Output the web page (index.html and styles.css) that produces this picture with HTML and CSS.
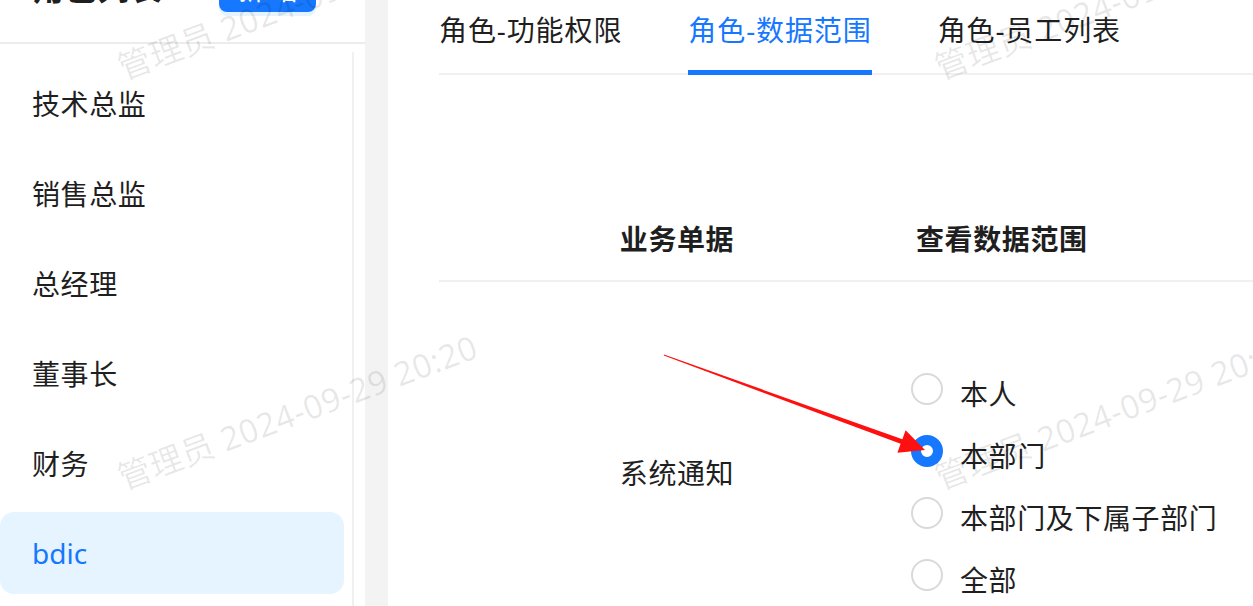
FILE: index.html
```html
<!DOCTYPE html>
<html lang="zh-CN">
<head>
    <meta charset="UTF-8">
    <meta name="viewport" content="width=device-width, initial-scale=1.0">
    <title>角色管理</title>
    <link rel="stylesheet" href="styles.css">
</head>
<body>
    <div class="app">
        <aside class="sidebar">
            <div class="side-head">
                <h2 class="side-title">角色列表</h2>
                <button class="add-btn">新 增</button>
            </div>
            <div class="role-list">
                <div class="role">技术总监</div>
                <div class="role">销售总监</div>
                <div class="role">总经理</div>
                <div class="role">董事长</div>
                <div class="role">财务</div>
                <div class="role active">bdic</div>
            </div>
        </aside>

        <main class="content">
            <div class="tabs">
                <div class="tab">角色-功能权限</div>
                <div class="tab active">角色-数据范围</div>
                <div class="tab">角色-员工列表</div>
            </div>

            <div class="table">
                <div class="thead">
                    <div class="th col-doc">业务单据</div>
                    <div class="th col-scope">查看数据范围</div>
                </div>
                <div class="trow">
                    <div class="td col-doc">系统通知</div>
                    <div class="td col-scope">
                        <div class="radios">
                            <label class="radio"><span class="dot"></span>本人</label>
                            <label class="radio checked"><span class="dot"></span>本部门</label>
                            <label class="radio"><span class="dot"></span>本部门及下属子部门</label>
                            <label class="radio"><span class="dot"></span>全部</label>
                        </div>
                    </div>
                </div>
            </div>
        </main>
    </div>

    <!-- annotation arrow drawn over the screenshot -->
    <svg class="arrow" width="1253" height="606" viewBox="0 0 1253 606">
        <polygon fill="#ff1010" points="664,354.6 902.4,439.2 905.6,430.2 925,450 897.4,452.8 900.6,443.8 663.8,355.6"/>
    </svg>

    <div class="watermarks">
        <span class="wm wm-1">管理员 2024-09-29 20:20</span>
        <span class="wm wm-2">管理员 2024-09-29 20:20</span>
        <span class="wm wm-3">管理员 2024-09-29 20:20</span>
        <span class="wm wm-4">管理员 2024-09-29 20:20</span>
    </div>
</body>
</html>
```

FILE: styles.css
```css
* {
    margin: 0;
    padding: 0;
    box-sizing: border-box;
}

body {
    width: 1253px;
    height: 606px;
    overflow: hidden;
    position: relative;
    background: #f3f3f3;
    font-family: "Noto Sans", "Noto Sans CJK SC", sans-serif;
    color: #1f1f1f;
    letter-spacing: 0.6px;
}

.app {
    display: flex;
    height: 606px;
}

/* left: role list */
.sidebar {
    width: 365px;
    flex: none;
    background: #fff;
    display: flex;
    flex-direction: column;
}

.side-head {
    height: 80px;
    margin-top: -36px;
    padding: 0 49px 30px 32px;
    display: flex;
    align-items: center;
    justify-content: space-between;
    border-bottom: 2px solid #ececec;
}

.side-title {
    font-size: 32px;
    line-height: 48px;
    font-weight: 700;
    color: #1f1f1f;
}

.add-btn {
    height: 48px;
    padding: 0 17px;
    border: none;
    border-radius: 8px;
    background: #1677ff;
    color: #fff;
    font-family: inherit;
    font-size: 28px;
    box-shadow: 0 4px 0 rgba(5, 145, 255, 0.1);
}

.role-list {
    flex: 1;
    margin: 8px 11px 0 0;
    padding: 10px 8px 0 0;
    border-right: 2px solid #f0f0f0;
}

.role {
    height: 82px;
    margin-bottom: 8px;
    padding-left: 32px;
    display: flex;
    align-items: center;
    font-size: 28px;
    border-radius: 14px;
}

.role.active {
    background: #e6f4ff;
    color: #1677ff;
    letter-spacing: 0;
}

/* right: tabs + table */
.content {
    flex: 1;
    margin-left: 23px;
    padding-left: 51px;
    background: #fff;
    overflow: hidden;
}

.tabs {
    display: flex;
    gap: 66px;
    border-bottom: 2px solid #f0f0f0;
}

.tab {
    position: relative;
    padding: 10px 0 23px;
    font-size: 28px;
    line-height: 40px;
    letter-spacing: 0.9px;
    white-space: nowrap;
}

.tab.active {
    color: #1677ff;
}

.tab.active::after {
    content: "";
    position: absolute;
    left: 0;
    right: 0;
    bottom: -2px;
    height: 5px;
    background: #1677ff;
}

.table {
    margin-top: 121px;
}

.thead,
.trow {
    display: grid;
    grid-template-columns: 476px 1fr;
    align-items: center;
}

.thead {
    height: 86px;
    border-bottom: 2px solid #f0f0f0;
}

.th {
    font-size: 28px;
    font-weight: 700;
}

.trow {
    padding: 80px 0 56px;
}

.td {
    font-size: 28px;
}

.td.col-doc {
    padding-bottom: 28px;
}

.col-doc {
    text-align: center;
}

.th.col-scope {
    padding-left: 1px;
}

.radios {
    margin-left: -4px;
}

.radio {
    height: 62px;
    display: flex;
    align-items: center;
    gap: 17px;
    font-size: 28px;
    white-space: nowrap;
}

.dot {
    width: 32px;
    height: 32px;
    flex: none;
    margin-bottom: 9px;
    border-radius: 50%;
    border: 2px solid #d9d9d9;
    background: #fff;
}

.radio.checked .dot {
    border: 10px solid #1677ff;
}

/* overlays */
.arrow {
    position: absolute;
    left: 0;
    top: 0;
    pointer-events: none;
}

.watermarks {
    position: absolute;
    inset: 0;
    overflow: hidden;
    pointer-events: none;
}

.wm {
    position: absolute;
    font-size: 33px;
    line-height: 33px;
    letter-spacing: 0.4px;
    white-space: nowrap;
    color: rgba(0, 0, 0, 0.09);
    transform-origin: 0 50%;
    transform: rotate(-20.5deg);
}

.wm-1 { left: 119px; top: 52px; }
.wm-2 { left: 936px; top: 52px; }
.wm-3 { left: 119px; top: 462px; }
.wm-4 { left: 936px; top: 462px; }
```
